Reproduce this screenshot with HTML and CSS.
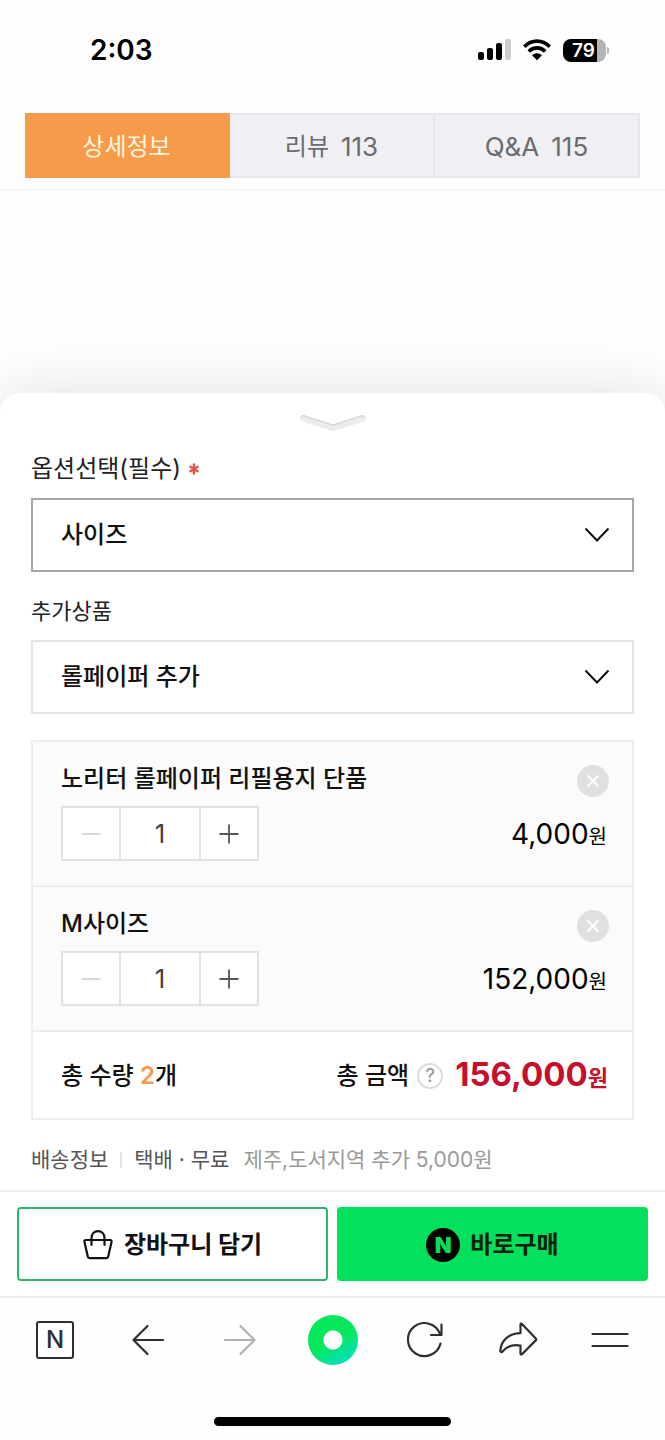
FILE: index.html
```html
<!DOCTYPE html>
<html lang="ko">
<head>
<meta charset="utf-8">
<meta name="viewport" content="width=device-width, initial-scale=1">
<title>옵션선택</title>
<link rel="stylesheet" href="styles.css">
</head>
<body>
<header class="status">
  <time class="clock">2:03</time>
  <div class="indicators">
    <svg width="34" height="22" viewBox="0 0 34 22" aria-hidden="true">
      <rect x="1" y="13" width="6" height="8" rx="2"/>
      <rect x="10" y="9" width="6" height="12" rx="2"/>
      <rect x="19" y="4" width="6" height="17" rx="2"/>
      <rect x="28" y="0" width="6" height="21" rx="2" fill="#cdcdcd"/>
    </svg>
    <svg width="28" height="22" viewBox="0 0 28 22" fill="none" stroke="#000" stroke-width="3.6" aria-hidden="true">
      <path d="M1.3 7.7C8.5.3 19.5.3 26.7 7.7"/>
      <path d="M5.8 12.4c4.7-4.7 11.700-4.700 16.400 0"/>
      <path d="M9 16.200c3-2.700 7-2.700 10 0L14 21.200z" fill="#000" stroke="none"/>
    </svg>
    <span class="battery">79</span>
  </div>
</header>

<nav class="tabs">
  <a class="tab tab-active" href="#detail">상세정보</a>
  <a class="tab" href="#review">리뷰 <span class="latin">113</span></a>
  <a class="tab" href="#qna"><span class="latin">Q&amp;A</span> <span class="latin">115</span></a>
</nav>

<main class="page">
  <section class="sheet">
    <button class="handle" type="button" aria-label="닫기">
      <svg width="68" height="20" viewBox="0 0 68 20" fill="none" stroke-width="5" stroke-linecap="round" stroke-linejoin="round">
        <path d="M4 4.500 34 14 64 4.500" stroke="#d6d6d6"/>
        <path d="M4 6 34 15.500 64 6" stroke="#ececec"/>
      </svg>
    </button>

    <label class="label label-main" for="size">옵션선택(필수)
      <svg class="required" width="10" height="12" viewBox="0 0 10 12" stroke="#e0524c" stroke-width="2.400" aria-hidden="true"><path d="M5 .5v11M.5 3.200l9 5.600M9.500 3.200l-9 5.600"/></svg>
    </label>
    <div class="picker">
      <select class="select select-focus" id="size"><option>사이즈</option></select>
      <svg class="chevron" width="26" height="16" viewBox="0 0 26 16" fill="none" stroke="#111" stroke-width="2"><path d="M1.500 1.500 13 13.500 24.500 1.500"/></svg>
    </div>

    <label class="label label-extra" for="extra">추가상품</label>
    <div class="picker">
      <select class="select" id="extra"><option>롤페이퍼 추가</option></select>
      <svg class="chevron" width="26" height="16" viewBox="0 0 26 16" fill="none" stroke="#111" stroke-width="2"><path d="M1.500 1.500 13 13.500 24.500 1.500"/></svg>
    </div>

    <div class="order">
      <ul class="items">
        <li class="item">
          <h2 class="item-name">노리터 롤페이퍼 리필용지 단품</h2>
          <button class="remove" type="button" aria-label="삭제"><svg width="14" height="14" viewBox="0 0 14 14" stroke="#fff" stroke-width="1.800"><path d="M1.500 1.500l11 11M12.500 1.500l-11 11"/></svg></button>
          <div class="quantity">
            <button type="button" aria-label="수량 감소"><svg width="20" height="20" viewBox="0 0 20 20" stroke="#cfcfcf" stroke-width="1.600"><path d="M.5 10h19"/></svg></button>
            <input type="text" inputmode="numeric" value="1" aria-label="수량">
            <button type="button" aria-label="수량 증가"><svg width="20" height="20" viewBox="0 0 20 20" stroke="#555" stroke-width="1.800"><path d="M.5 10h19M10 .5v19"/></svg></button>
          </div>
          <p class="price">4,000<small>원</small></p>
        </li>
        <li class="item">
          <h2 class="item-name">M사이즈</h2>
          <button class="remove" type="button" aria-label="삭제"><svg width="14" height="14" viewBox="0 0 14 14" stroke="#fff" stroke-width="1.800"><path d="M1.500 1.500l11 11M12.500 1.500l-11 11"/></svg></button>
          <div class="quantity">
            <button type="button" aria-label="수량 감소"><svg width="20" height="20" viewBox="0 0 20 20" stroke="#cfcfcf" stroke-width="1.600"><path d="M.5 10h19"/></svg></button>
            <input type="text" inputmode="numeric" value="1" aria-label="수량">
            <button type="button" aria-label="수량 증가"><svg width="20" height="20" viewBox="0 0 20 20" stroke="#555" stroke-width="1.800"><path d="M.5 10h19M10 .5v19"/></svg></button>
          </div>
          <p class="price">152,000<small>원</small></p>
        </li>
      </ul>
      <div class="total">
        <p class="total-count">총 수량 <em>2</em>개</p>
        <p class="total-label">총 금액</p>
        <button class="help" type="button" aria-label="금액 안내">?</button>
        <p class="total-price">156,000<small>원</small></p>
      </div>
    </div>

    <p class="delivery"><span class="delivery-title">배송정보</span><span>택배 · 무료</span><span class="delivery-extra">제주,도서지역 추가 5,000원</span></p>
  </section>
</main>

<div class="actions">
  <button class="action action-cart" type="button">
    <svg width="30" height="30" viewBox="0 0 30 30" fill="none" stroke="#111" stroke-width="2.200" stroke-linejoin="round" stroke-linecap="round" aria-hidden="true">
      <path d="M2.800 10h24.400c1 0 1.600.8 1.400 1.700L25.200 26.500c-.2 1-1 1.700-2 1.700H6.800c-1 0-1.800-.7-2-1.700L1.400 11.700C1.200 10.800 1.800 10 2.800 10z"/>
      <path d="M8.500 15V8.300c0-9.600 13-9.600 13 0V15"/>
    </svg>
    장바구니 담기
  </button>
  <button class="action action-buy" type="button"><span class="pay-logo">N</span>바로구매</button>
</div>

<nav class="toolbar">
  <button type="button" aria-label="네이버 홈"><span class="home-logo">N</span></button>
  <button type="button" aria-label="뒤로">
    <svg width="34" height="34" viewBox="0 0 34 34"><path d="M32 17H2.500M16.500 3 2.500 17l14 14"/></svg>
  </button>
  <button class="muted" type="button" aria-label="앞으로">
    <svg width="34" height="34" viewBox="0 0 34 34"><path d="M2 17h29.500M17.500 3l14 14-14 14"/></svg>
  </button>
  <button type="button" aria-label="그린닷"><span class="dot"></span></button>
  <button type="button" aria-label="새로고침">
    <svg width="36" height="38" viewBox="0 0 36 38"><path d="M33.500 22.500A16.500 16.500 0 1 1 33 13M34.500 3.500V14H24"/></svg>
  </button>
  <button type="button" aria-label="공유">
    <svg width="40" height="36" viewBox="0 0 40 36"><path d="M22.500 2.500c0-.9.900-1.300 1.500-.6L38 16.800c.4.400.4.900 0 1.300L24 32.200c-.6.600-1.500.2-1.500-.6v-8C14 22 9 24 4.500 29.500c-.9 1-2.300.6-2.200-.7C3 18 11 11.500 22.500 11.200z"/></svg>
  </button>
  <button type="button" aria-label="메뉴">
    <svg width="38" height="18" viewBox="0 0 38 18"><path d="M1.500 3h35M1.500 15h35"/></svg>
  </button>
</nav>
<div class="home-bar"></div>
</body>
</html>
```

FILE: styles.css
```css
* { box-sizing: border-box; }

body {
  margin: 0;
  min-height: 100vh;
  display: flex;
  flex-direction: column;
  background: #fefefe;
  color: #111;
  font: 400 24px/36px Inter, "Noto Sans CJK KR", sans-serif;
}

h2, p, ul { margin: 0; padding: 0; font-size: inherit; font-weight: 400; }
ul { list-style: none; }
button, input, select { font: inherit; color: inherit; margin: 0; padding: 0; }
button { border: 0; background: none; }
small { font-size: 20px; }
svg { display: block; flex: none; }

/* Status bar */
.status {
  display: flex;
  justify-content: space-between;
  align-items: center;
  padding: 32px 59px 45px 90px;
  color: #000;
}
.clock { font-size: 28px; font-weight: 600; }
.indicators { display: flex; align-items: center; gap: 12px; }
.battery {
  position: relative;
  width: 43px;
  height: 23px;
  padding-left: 9px;
  border-radius: 8px;
  background: linear-gradient(90deg, #000 78%, #b4b4b4 78%);
  color: #fff;
  font-size: 19px;
  font-weight: 600;
  line-height: 23px;
}
.battery::after {
  content: "";
  position: absolute;
  left: 44px;
  top: 8px;
  width: 2px;
  height: 7px;
  border-radius: 0 2px 2px 0;
  background: #b4b4b4;
}

/* Section tabs */
.tabs {
  display: flex;
  padding: 0 25px 11px;
  border-bottom: 2px solid #f4f4f5;
}
.tab {
  flex: 1;
  display: flex;
  justify-content: center;
  align-items: center;
  gap: 12px;
  height: 65px;
  padding-top: 2px;
  border: solid #e7e7eb;
  border-width: 2px 2px 2px 0;
  background: #f0eff4;
  color: #6b6b6e;
  text-decoration: none;
}
.tab-active { border-color: #f79a4b; background: #f79a4b; color: #fff6dc; }
.latin { font-size: 26px; }

/* Option sheet */
.page { flex: 1; display: flex; flex-direction: column; justify-content: flex-end; overflow: hidden; padding-top: 60px; }
.sheet {
  display: flex;
  flex-direction: column;
  padding: 0 31px 12px;
  border-radius: 20px 20px 0 0;
  background: #fff;
  box-shadow: 0 0 60px rgba(0, 0, 0, .12);
}
.handle { align-self: center; padding: 20px 0 18px; }
.label { display: flex; align-items: center; gap: 8px; color: #222; }
.label-main { padding-bottom: 11px; }
.label-extra { font-size: 22px; padding: 21px 0 11px; }
.picker { display: grid; align-items: center; }
.select {
  grid-area: 1 / 1;
  width: 100%;
  height: 74px;
  padding: 0 60px 0 28px;
  appearance: none;
  border: 2px solid #e4e4e4;
  border-radius: 0;
  background: #fff;
  color: #111;
  font-weight: 500;
}
.select-focus { border-color: #a6a6a6; }
.chevron { grid-area: 1 / 1; justify-self: end; margin-right: 24px; pointer-events: none; }

/* Selected items */
.order { margin-top: 26px; border: solid #ededf0; border-width: 0 2px 2px; }
.item {
  display: grid;
  grid-template-columns: 1fr auto;
  row-gap: 9px;
  padding: 19px 23px 24px 28px;
  border-top: 2px solid #ededf0;
  background: #fbfbfb;
}
.item-name { font-weight: 500; }
.remove {
  display: grid;
  place-items: center;
  place-self: end;
  width: 32px;
  height: 32px;
  border-radius: 50%;
  background: #e0e0e0;
}
.quantity {
  display: flex;
  width: 198px;
  height: 55px;
  border: 2px solid #e2e2e2;
  background: #fff;
}
.quantity button { flex: 1; display: grid; place-items: center; }
.quantity input {
  width: 82px;
  border: solid #e2e2e2;
  border-width: 0 2px;
  background: none;
  color: #444;
  font-size: 26px;
  text-align: center;
}
.price { align-self: center; padding: 3px 2px 0 0; color: #000; font-size: 28px; text-align: right; }

.total {
  display: flex;
  align-items: center;
  height: 88px;
  padding: 2px 24px 0 28px;
  border-top: 2px solid #ededf0;
  background: #fff;
  font-weight: 500;
}
.total p { font-weight: inherit; }
.total .total-count { flex: 1; }
.total-count em { color: #f79a4b; font-style: normal; font-weight: 600; }
.help {
  width: 26px;
  height: 26px;
  margin: 0 12px 0 8px;
  border: 2px solid #dcdcdc;
  border-radius: 50%;
  color: #999;
  font-size: 18px;
  line-height: 22px;
}
.total .total-price { color: #c50f2b; font-size: 33px; font-weight: 700; }
.total-price small { font-size: 22px; }

.delivery { display: flex; align-items: center; padding-top: 22px; color: #555; font-size: 21px; }
.delivery-title { display: flex; align-items: center; }
.delivery-title::after { content: ""; width: 2px; height: 16px; margin: 0 12px; background: #e4e4e4; }
.delivery-extra { margin-left: 14px; color: #999; }

/* Purchase buttons */
.actions { display: flex; gap: 9px; padding: 15px 17px; border-top: 2px solid #f0f0f1; background: #fff; }
.action {
  flex: 1;
  display: flex;
  justify-content: center;
  align-items: center;
  gap: 11px;
  height: 74px;
  padding-top: 2px;
  border: 2px solid #2fb568;
  border-radius: 4px;
  background: #fff;
  font-weight: 700;
}
.action-buy { border-color: #03e05b; background: #03e05b; color: #0a1f0c; gap: 10px; }
.pay-logo {
  width: 34px;
  height: 34px;
  border-radius: 50%;
  background: #000;
  color: #03e05b;
  font-size: 22px;
  font-weight: 900;
  line-height: 34px;
}

/* Browser toolbar */
.toolbar {
  display: flex;
  justify-content: space-between;
  align-items: center;
  padding: 17px 30px 52px;
  border-top: 2px solid #ececef;
  background: #fefefe;
}
.toolbar button { display: grid; place-items: center; width: 50px; height: 50px; color: #2e2f34; }
.toolbar .muted { color: #b1b1b1; }
.toolbar svg { fill: none; stroke: currentColor; stroke-width: 2.2; stroke-linecap: round; stroke-linejoin: round; }
.home-logo {
  width: 38px;
  height: 38px;
  border: 2px solid currentColor;
  border-radius: 3px;
  font-weight: 500;
  line-height: 34px;
}
.dot {
  width: 50px;
  height: 50px;
  border-radius: 50%;
  background: radial-gradient(circle, #fff 9px, transparent 10px), linear-gradient(150deg, #05e85c 50%, #04ddd0 95%);
}
.home-bar { align-self: center; width: 237px; height: 9px; margin-bottom: 14px; border-radius: 5px; background: #000; }
```
